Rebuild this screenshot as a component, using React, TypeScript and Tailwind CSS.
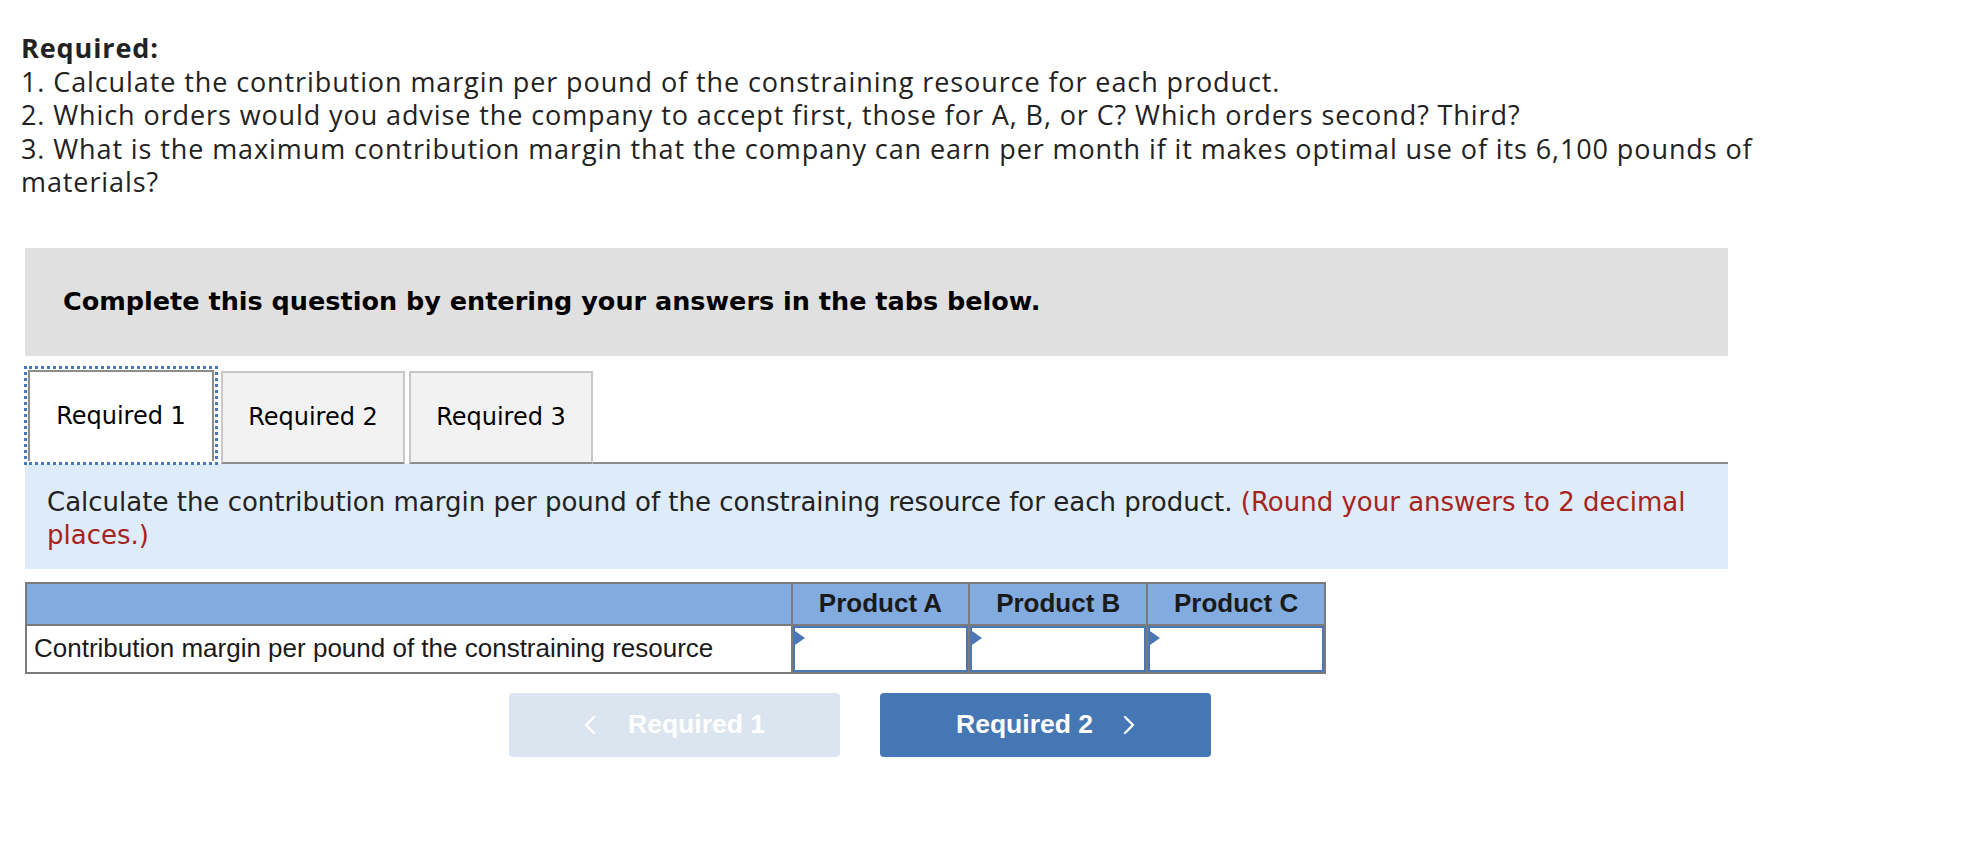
import React from "react";

const tabs = ["Required 1", "Required 2", "Required 3"];
const products = ["Product A", "Product B", "Product C"];

function AnswerCell() {
  return (
    <td className="border-2 border-[#7b7b7b] p-0">
      <div className="relative h-[46px] border-2 border-[#4a78b6] bg-white">
        <span className="absolute left-0 top-[3px] h-0 w-0 border-y-[7px] border-l-[10px] border-y-transparent border-l-[#4a78b6]" />
      </div>
    </td>
  );
}

function Chevron({ dir }: { dir: "left" | "right" }) {
  return (
    <svg width="12" height="20" viewBox="0 0 12 20" fill="none" stroke="currentColor" strokeWidth="2.4" strokeLinecap="round" strokeLinejoin="round">
      {dir === "left" ? <polyline points="10,2 2,10 10,18" /> : <polyline points="2,2 10,10 2,18" />}
    </svg>
  );
}

export default function App() {
  return (
    <div className="min-h-[860px] bg-white pt-[31px] text-[#222]">
      <div className="pl-[21px] pr-[100px] font-['Open_Sans',sans-serif] text-[27px] tracking-[0.9px] leading-[33.5px]">
        <p className="font-bold">Required:</p>
        <p>1. Calculate the contribution margin per pound of the constraining resource for each product.</p>
        <p>2. Which orders would you advise the company to accept first, those for A, B, or C? Which orders second? Third?</p>
        <p>
          3. What is the maximum contribution margin that the company can earn per month if it makes optimal use of its 6,100 pounds of
          materials?
        </p>
      </div>

      <div className="ml-[25px] w-[1703px]">
        <div className="mt-[49px] flex h-[108px] items-center bg-[#e0e0e0] pl-[38px] font-['DejaVu_Sans',Verdana,sans-serif] text-[25.5px] font-bold text-black">
          Complete this question by entering your answers in the tabs below.
        </div>

        <div className="mt-[11px] flex items-end font-['DejaVu_Sans',Verdana,sans-serif] text-[24px] text-black">
          {tabs.map((tab, i) =>
            i === 0 ? (
              <div key={tab} className="outline-dotted outline-[3px] outline-[#4a78b6] -outline-offset-[2px] p-[3px]">
                <div className="flex h-[91px] w-[186px] items-center justify-center border-2 border-b-0 border-[#8c8c8c] bg-white">
                  {tab}
                </div>
              </div>
            ) : (
              <div
                key={tab}
                className="ml-[4px] flex h-[93px] w-[184px] items-center justify-center border-2 border-[#c8c8c8] border-b-[#8c8c8c] bg-[#f2f2f2]"
              >
                {tab}
              </div>
            )
          )}
          <div className="h-[2px] flex-1 bg-[#8c8c8c]" />
        </div>

        <div className="h-[105px] bg-[#deebf8] px-[22px] pt-[22px] font-['DejaVu_Sans',Verdana,sans-serif] text-[26px] leading-[33px] text-[#222]">
          Calculate the contribution margin per pound of the constraining resource for each product.{" "}
          <span className="text-[#a6241e]">(Round your answers to 2 decimal places.)</span>
        </div>

        <table className="mt-[13px] w-[1301px] border-collapse font-['Liberation_Sans',Arial,sans-serif]">
          <thead>
            <tr className="h-[42px] bg-[#82abdf]">
              <th className="w-[767px] border-2 border-[#7b7b7b]" />
              {products.map((p) => (
                <th key={p} className="w-[178px] border-2 border-[#7b7b7b] text-center text-[26px] font-bold text-[#1a1a1a]">
                  {p}
                </th>
              ))}
            </tr>
          </thead>
          <tbody>
            <tr>
              <td className="border-2 border-[#7b7b7b] pl-[7px] text-left text-[26px] text-[#1a1a1a]">
                Contribution margin per pound of the constraining resource
              </td>
              <AnswerCell />
              <AnswerCell />
              <AnswerCell />
            </tr>
          </tbody>
        </table>

        <div className="mt-[19px] flex gap-[40px] pl-[484px] font-['Liberation_Sans',Arial,sans-serif] text-[26.5px] font-bold text-white">
          <button className="flex h-[64px] w-[331px] items-center justify-center gap-[32px] rounded-[4px] bg-[#dbe5f0]">
            <Chevron dir="left" />
            <span>Required 1</span>
          </button>
          <button className="flex h-[64px] w-[331px] items-center justify-center gap-[30px] rounded-[4px] bg-[#4677b5]">
            <span>Required 2</span>
            <Chevron dir="right" />
          </button>
        </div>
      </div>
    </div>
  );
}
